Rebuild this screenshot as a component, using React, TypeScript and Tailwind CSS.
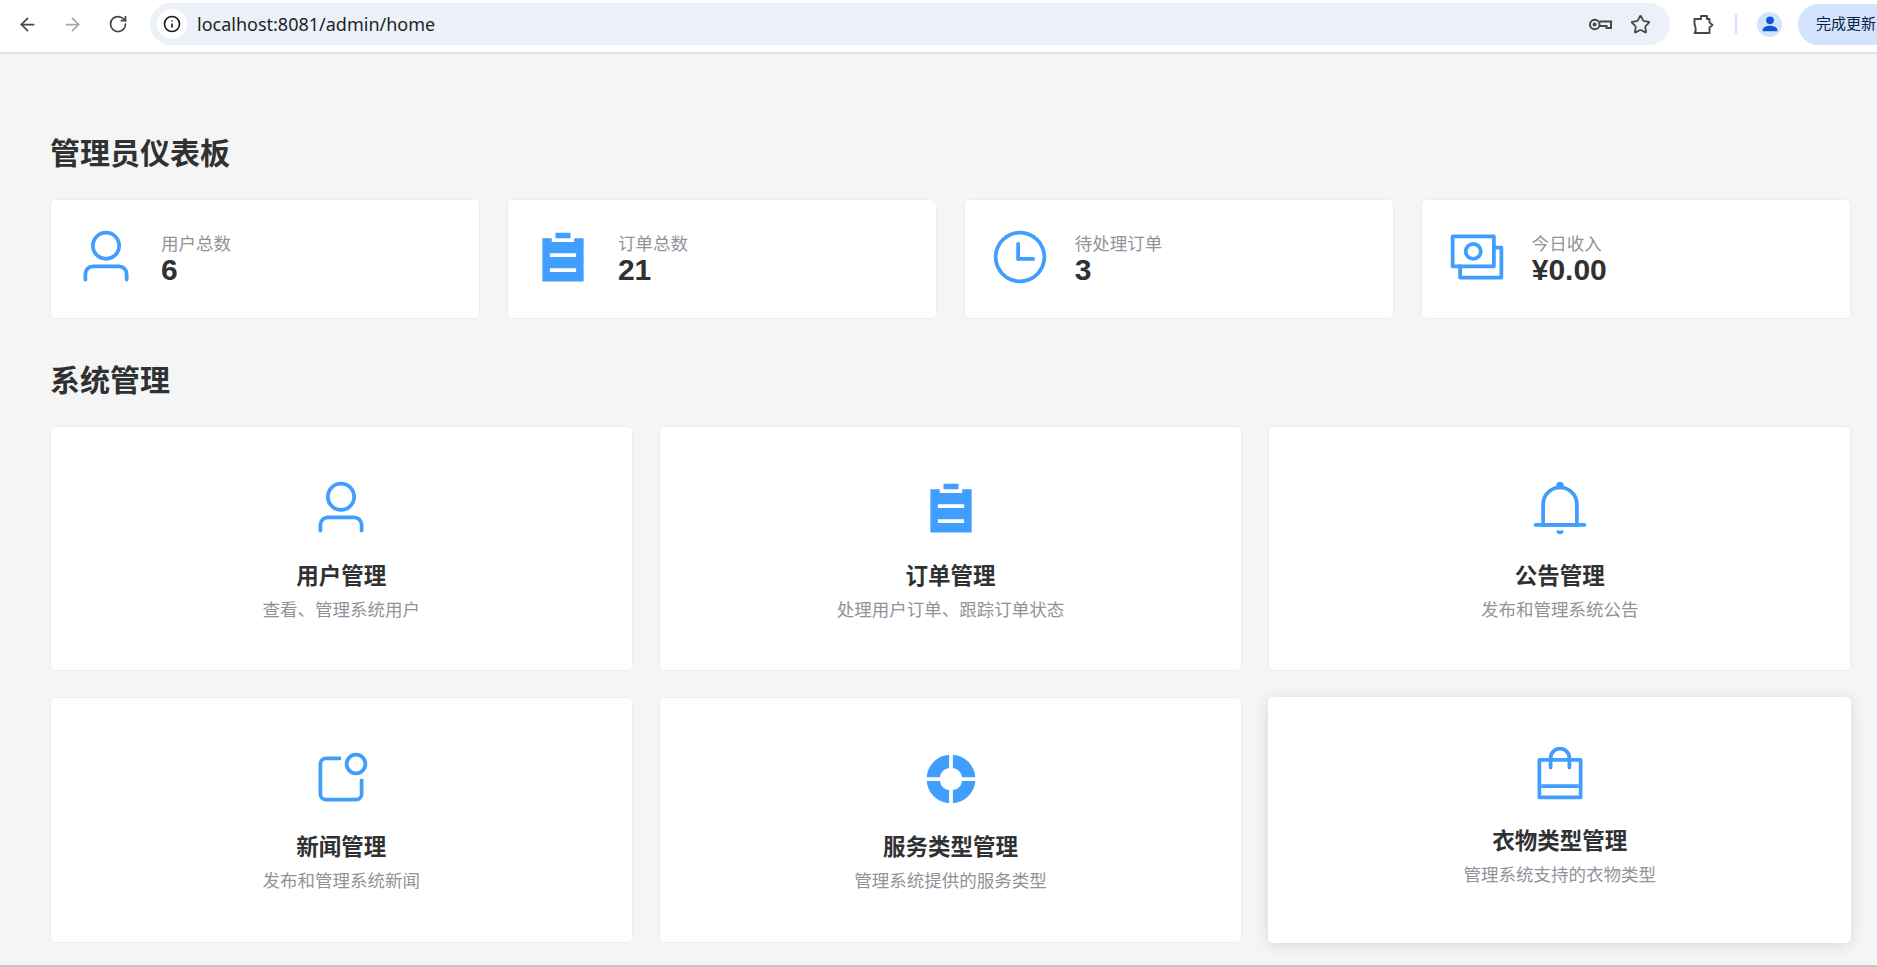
import { ArrowLeft, ArrowRight, Info, RotateCw, Star } from "lucide-react";
import type { ReactNode } from "react";

const font = "font-['Liberation_Sans','Noto_Sans_CJK_SC',sans-serif]";

function Icon({ size, children }: { size: string; children: ReactNode }) {
  return (
    <svg viewBox="0 0 1024 1024" className={`${size} shrink-0 text-[#409eff]`} fill="currentColor">
      {children}
    </svg>
  );
}

const userIcon = (
  <path d="M512 512a192 192 0 1 0 0-384 192 192 0 0 0 0 384zm0 64a256 256 0 1 1 0-512 256 256 0 0 1 0 512zm320 320v-96a96 96 0 0 0-96-96H288a96 96 0 0 0-96 96v96a32 32 0 1 1-64 0v-96a160 160 0 0 1 160-160h448a160 160 0 0 1 160 160v96a32 32 0 1 1-64 0z" />
);
const listIcon = (
  <path d="M704 192h160v736H160V192h160v64h384v-64zM288 512h448v-64H288v64zm0 256h448v-64H288v64zm96-576V96h256v96H384z" />
);
const clockIcon = (
  <>
    <path d="M512 896a384 384 0 1 0 0-768 384 384 0 0 0 0 768zm0 64a448 448 0 1 1 0-896 448 448 0 0 1 0 896z" />
    <path d="M480 256a32 32 0 0 1 32 32v256a32 32 0 0 1-64 0V288a32 32 0 0 1 32-32z" />
    <path d="M480 512h256q32 0 32 32t-32 32H480q-32 0-32-32t32-32z" />
  </>
);
const moneyIcon = (
  <>
    <path d="M256 640v192h640V384H768v-64h150.976c14.272 0 19.456 1.472 24.64 4.288a29.056 29.056 0 0 1 12.16 12.096c2.752 5.184 4.224 10.368 4.224 24.64v493.952c0 14.272-1.472 19.456-4.288 24.64a29.056 29.056 0 0 1-12.096 12.16c-5.184 2.752-10.368 4.224-24.64 4.224H233.024c-14.272 0-19.456-1.472-24.64-4.288a29.056 29.056 0 0 1-12.16-12.096c-2.688-5.184-4.224-10.368-4.224-24.576V640h64z" />
    <path d="M768 192H128v448h640V192zm64-22.976v493.952c0 14.272-1.472 19.456-4.288 24.64a29.056 29.056 0 0 1-12.096 12.16c-5.184 2.752-10.368 4.224-24.64 4.224H105.024c-14.272 0-19.456-1.472-24.64-4.288a29.056 29.056 0 0 1-12.16-12.096C65.536 682.432 64 677.248 64 663.04V169.024c0-14.272 1.472-19.456 4.288-24.64a29.056 29.056 0 0 1 12.096-12.16C85.568 129.536 90.752 128 104.96 128h685.952c14.272 0 19.456 1.472 24.64 4.288a29.056 29.056 0 0 1 12.16 12.096c2.752 5.184 4.224 10.368 4.224 24.64z" />
    <path d="M448 576a160 160 0 1 1 0-320 160 160 0 0 1 0 320zm0-64a96 96 0 1 0 0-192 96 96 0 0 0 0 192z" />
  </>
);
const bellIcon = (
  <>
    <path d="M512 64a64 64 0 0 1 64 64v64H448v-64a64 64 0 0 1 64-64z" />
    <path d="M256 768h512V448a256 256 0 1 0-512 0v320zm256-640a320 320 0 0 1 320 320v384H192V448a320 320 0 0 1 320-320z" />
    <path d="M96 768h832q32 0 32 32t-32 32H96q-32 0-32-32t32-32zm352 128h128a64 64 0 0 1-128 0z" />
  </>
);
const noticeIcon = (
  <>
    <path d="M512 128v64H256a64 64 0 0 0-64 64v512a64 64 0 0 0 64 64h512a64 64 0 0 0 64-64V512h64v256a128 128 0 0 1-128 128H256a128 128 0 0 1-128-128V256a128 128 0 0 1 128-128h256z" />
    <path d="M768 384a128 128 0 1 0 0-256 128 128 0 0 0 0 256zm0 64a192 192 0 1 1 0-384 192 192 0 0 1 0 384z" />
  </>
);
const helpIcon = (
  <path d="M926.784 480H701.312A192.512 192.512 0 0 0 544 322.688V97.216A416.064 416.064 0 0 1 926.784 480zm0 64A416.064 416.064 0 0 1 544 926.784V701.312A192.512 192.512 0 0 0 701.312 544h225.472zM97.28 544h225.472A192.512 192.512 0 0 0 480 701.312v225.472A416.064 416.064 0 0 1 97.216 544zm0-64A416.064 416.064 0 0 1 480 97.216v225.472A192.512 192.512 0 0 0 322.688 480H97.216z" />
);
const bagIcon = (
  <>
    <path d="M704 320v96a32 32 0 0 1-64 0v-96H384v96a32 32 0 0 1-64 0v-96H192v576h640V320H704zm-384-64a192 192 0 1 1 384 0h160a32 32 0 0 1 32 32v640a32 32 0 0 1-32 32H160a32 32 0 0 1-32-32V288a32 32 0 0 1 32-32h160zm64 0h256a128 128 0 1 0-256 0z" />
    <path d="M192 704h640v64H192z" />
  </>
);

const stats = [
  { icon: userIcon, label: "用户总数", value: "6" },
  { icon: listIcon, label: "订单总数", value: "21" },
  { icon: clockIcon, label: "待处理订单", value: "3" },
  { icon: moneyIcon, label: "今日收入", value: "¥0.00" },
];

const modules = [
  { icon: userIcon, title: "用户管理", desc: "查看、管理系统用户" },
  { icon: listIcon, title: "订单管理", desc: "处理用户订单、跟踪订单状态" },
  { icon: bellIcon, title: "公告管理", desc: "发布和管理系统公告" },
  { icon: noticeIcon, title: "新闻管理", desc: "发布和管理系统新闻" },
  { icon: helpIcon, title: "服务类型管理", desc: "管理系统提供的服务类型" },
  { icon: bagIcon, title: "衣物类型管理", desc: "管理系统支持的衣物类型", hovered: true },
];

function BrowserBar() {
  return (
    <div className="flex h-[54px] shrink-0 items-start overflow-hidden border-b-2 border-[#e2e2e2] bg-white">
      <div className="flex h-[48px] w-[150px] shrink-0 items-center pl-[17px] text-[#474747]">
        <ArrowLeft size={21} strokeWidth={2} />
        <ArrowRight size={21} strokeWidth={2} className="ml-[24px] text-[#a8a8a8]" />
        <RotateCw size={20} strokeWidth={2.1} className="ml-[25px]" />
      </div>
      <div className="mt-[3px] flex h-[42px] w-[1520px] shrink-0 items-center rounded-full bg-[#ecf1f9] pl-[7px] pr-[19px]">
        <div className="flex h-[30px] w-[30px] items-center justify-center rounded-full bg-white">
          <Info size={18} strokeWidth={2.2} className="text-[#1f1f1f]" />
        </div>
        <span className="ml-[10px] font-['Noto_Sans',sans-serif] text-[18px] text-[#1f1f1f]">localhost:8081/admin/home</span>
        <svg viewBox="0 0 23 13" className="ml-auto h-[13px] w-[23px] text-[#474747]" fill="none" stroke="currentColor" strokeWidth="2">
          <circle cx="5.8" cy="6.5" r="4.8" />
          <circle cx="5.6" cy="6.5" r="2" fill="currentColor" stroke="none" />
          <path d="M10.5 3.5H22v6.5h-4.5V8H10.5" />
        </svg>
        <Star size={21} strokeWidth={2} className="ml-[18px] text-[#474747]" />
      </div>
      <div className="flex h-[48px] flex-1 items-center">
        <svg viewBox="0 0 20 19" className="ml-[23px] h-[19px] w-[21px] shrink-0 text-[#474747]" fill="none" stroke="currentColor" strokeWidth="1.9" strokeLinejoin="round">
          <path d="M1 4h6.5V1h6v3H16v3.5l3 2.5-3 2.5V18H1c1.5-2 1.5-4 1-5.5S1 9 1 8z" />
        </svg>
        <div className="ml-[21px] h-[20px] w-[2px] shrink-0 bg-[#d3e3fd]" />
        <div className="ml-[20px] flex h-[25px] w-[25px] shrink-0 items-center justify-center rounded-full bg-[#d3e3fd]">
          <svg viewBox="0 0 24 24" className="h-[22px] w-[22px] text-[#0b57d0]" fill="currentColor">
            <circle cx="12" cy="8" r="4.2" />
            <path d="M4 20v-1.5c0-3 4-4.7 8-4.7s8 1.7 8 4.7V20z" />
          </svg>
        </div>
        <div className={`${font} ml-[16px] flex h-[41px] w-[120px] shrink-0 items-center rounded-full bg-[#d3e3fd] pl-[18px] text-[15px] text-[#0a1f44]`}>
          <span className="whitespace-nowrap">完成更新</span>
        </div>
      </div>
    </div>
  );
}

function StatCard({ icon, label, value }: { icon: ReactNode; label: string; value: string }) {
  return (
    <div className="flex h-[120px] items-center gap-[25px] rounded-[5px] border border-[#ebeef5] bg-white pl-[25px]">
      <Icon size="mb-[4px] h-[60px] w-[60px]">{icon}</Icon>
      <div>
        <div className="text-[17.5px] leading-[22px] text-[#909399]">{label}</div>
        <div className="text-[30px] font-bold leading-[30px] text-[#303133]">{value}</div>
      </div>
    </div>
  );
}

function ModuleCard({ icon, title, desc, hovered }: { icon: ReactNode; title: string; desc: string; hovered?: boolean }) {
  return (
    <div
      className={
        hovered
          ? "flex h-[245.5px] flex-col items-center rounded-[5px] bg-white pt-[46px] shadow-[0_2px_15px_rgba(0,0,0,0.12)]"
          : "flex h-[245.5px] flex-col items-center rounded-[5px] border border-[#ebeef5] bg-white pt-[51px]"
      }
    >
      <Icon size="h-[60px] w-[60px]">{icon}</Icon>
      <div className="mt-[22px] text-[22.5px] font-bold leading-[34px] text-[#303133]">{title}</div>
      <div className="mt-[2px] text-[17.5px] leading-[28px] text-[#909399]">{desc}</div>
    </div>
  );
}

export default function App() {
  return (
    <div className={`${font} flex h-[967px] flex-col overflow-hidden bg-[#f5f5f5]`}>
      <BrowserBar />
      <div className="flex-1 pl-[50px] pr-[26px] pt-[82px]">
        <h2 className="text-[30px] font-bold leading-[36px] text-[#303133]">管理员仪表板</h2>
        <div className="mt-[27px] grid grid-cols-4 gap-[26.67px]">
          {stats.map((s) => (
            <StatCard key={s.label} icon={s.icon} label={s.label} value={s.value} />
          ))}
        </div>
        <h2 className="mt-[44px] text-[30px] font-bold leading-[36px] text-[#303133]">系统管理</h2>
        <div className="mt-[26.5px] grid grid-cols-3 gap-[26.67px] gap-y-[26px]">
          {modules.map((m) => (
            <ModuleCard key={m.title} icon={m.icon} title={m.title} desc={m.desc} hovered={m.hovered} />
          ))}
        </div>
      </div>
      <div className="h-[2px] shrink-0 bg-[#c4c4cc]" />
    </div>
  );
}
